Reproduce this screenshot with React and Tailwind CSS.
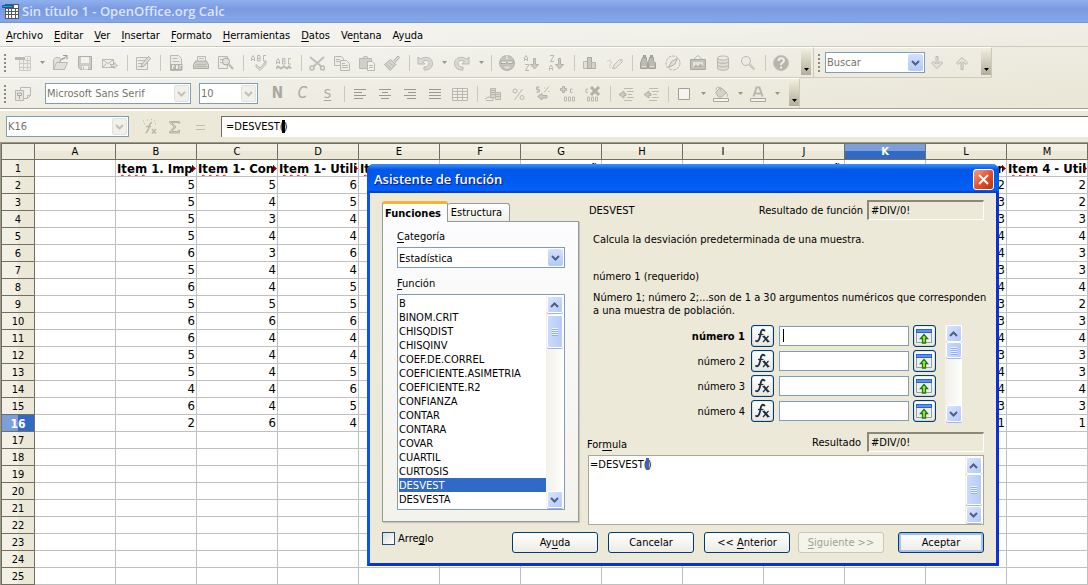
import React from "react";

const MENU = [
  ["", "A", "rchivo"], ["", "E", "ditar"], ["", "V", "er"], ["", "I", "nsertar"], ["", "F", "ormato"],
  ["", "H", "erramientas"], ["", "D", "atos"], ["Ve", "n", "tana"], ["Ay", "u", "da"],
];

const COLS = ["A", "B", "C", "D", "E", "F", "G", "H", "I", "J", "K", "L", "M"];
const ROWS = Array.from({ length: 25 }, (_, i) => i + 1);
const VALUES = {
  B: [5, 5, 5, 5, 6, 5, 6, 5, 6, 6, 5, 5, 4, 6, 2],
  C: [5, 4, 3, 4, 3, 4, 4, 5, 6, 4, 4, 4, 4, 4, 6],
  D: [6, 5, 4, 4, 6, 4, 5, 5, 6, 4, 4, 5, 6, 5, 4],
  L: [2, 3, 3, 4, 4, 3, 4, 3, 3, 4, 3, 4, 4, 3, 1],
  M: [2, 2, 3, 4, 3, 3, 4, 2, 3, 4, 3, 3, 4, 3, 1],
};
const TITLES = {
  B: ["Item", " 1. Imp"],
  C: ["Item", " 1- Con"],
  D: ["Item", " 1- Utili"],
  E: ["It", ""],
  M: ["Item", " 4 - Util"],
};
const TAILS = { G: "ñ", J: "ñ", L: "r" };

const FUNCTIONS = [
  "B", "BINOM.CRIT", "CHISQDIST", "CHISQINV", "COEF.DE.CORREL", "COEFICIENTE.ASIMETRIA", "COEFICIENTE.R2",
  "CONFIANZA", "CONTAR", "CONTARA", "COVAR", "CUARTIL", "CURTOSIS", "DESVEST", "DESVESTA",
];

const G = "#adaca4";
const L = "#deddd6";

const ICONS = {
  sheet: <><path d="M1 2h14v13H4V5H1z" fill="#eeede7" stroke="none" /><path d="M0 2h10v3H0z" fill={G} stroke="none" /><path d="M4.500 5v10.500h11v-14H10M4.500 8.500h11M4.500 12.500h11M8.500 5v10M12.500 3v12M10 5.500h5" stroke="#c4c3bb" /></>,
  open: <><path d="M1.500 14.500v-10l2-2h4l1 2h2M1.500 14.500l3-7h11l-3 7z" fill={L} /><path d="M8 7.500c0-3 2-4.500 5-4.500M11 .5h4v4M15 .5l-4 4" stroke="#86857e" /></>,
  save: <><path d="M1.500 1.500h13v13h-11l-2-2z" fill="#c5c4bd" stroke="#9d9c95" /><path d="M4 2h8v6H4zM5 11h6v3.500H5z" fill="#f3f2ec" stroke="none" /><path d="M6.500 11.500v2.500" /></>,
  mail: <><path d="M.5 4.500h11v8H.5zM.5 4.500l5.500 4 5.500-4M.5 12.500l4-4M11.500 12.500l-4-4" fill="#edece6" /><path d="M9 9.500h3v-2l3.500 3-3.500 3v-2H9z" fill={L} /></>,
  edit: <><path d="M1.500 2.500h11v12h-11z" fill="#edece6" /><path d="M3 5.500h7M3 8.500h4M3 11.500h3" /><path d="M6 12l1-3 6.500-7.500 2 2L9 11z" fill={L} stroke="#98978f" /></>,
  pdf: <><path d="M2.500.5h8l3 3v12h-11z" fill="#edece6" /><path d="M2 9h12.500v6H2z" fill="#a3a29a" stroke="none" /><path d="M4.500 14v-3.500h1.500v2M8.500 10.500v3h1v-3zM12 14v-3.500h1.500" stroke="#f4f3ed" /><path d="M4.500 3.500h5M4.500 6.500h7" /></>,
  print: <><path d="M4.500 6V1.500h8V6" fill="#f3f2ec" /><path d="M.5 9.500l2-3.500h11l2 3.500v4H.5z" fill="#c8c7c0" stroke="#9d9c95" /><path d="M3 9.500h10M2 11.500h12M6 3.500h5" /></>,
  preview: <><path d="M.5 1.500h9v12h-9z" fill="#edece6" /><path d="M2 4.500h3M2 7.500h3" /><circle cx="8" cy="6.500" r="3.500" fill={L} stroke="#98978f" /><path d="M11 9.500l4 4.500" strokeWidth="2" /></>,
  spell: <><path d="M.5 6V3L2 .5 3.500 3v3M.5 4.500h3M6.500.5V6H9V.5zM6.500 3.500H9M15 .5h-2.500V6H15" /><path d="M5 9.500l4 3.500 6-7v3l-6 6.500-4-3.500z" fill={L} /></>,
  autospell: <><path d="M.5 9V6L2 3.500 3.500 6v3M.5 7.500h3M6.500 3.500V9H9V3.500zM6.500 6H9M15 3.500h-2.500V9H15" /><path d="M0 13.500l2-2 3 2 3-2 3 2 2-2 2 2" strokeWidth="2" /></>,
  cut: <><path d="M1 2l12 10M15 2L4 12" stroke="#b6b5ad" strokeWidth="2" /><circle cx="3" cy="13" r="2" strokeWidth="1.500" /><circle cx="13.500" cy="13" r="2" strokeWidth="1.500" /></>,
  copy: <><path d="M.5 1.500h7l2 2v7h-9z" fill="#edece6" /><path d="M6.500 5.500h6l3 3v7h-9z" fill="#edece6" /><path d="M2 4.500h4M2 6.500h4M8 8.500h3M8 10.500h6M8 12.500h6" /></>,
  paste: <><path d="M.5 3.500h12v10H.5z" fill="#c9c8c1" /><path d="M4 3.500l1-2h3l1 2z" fill={L} /><path d="M8.500 6.500h5l2 2v7h-7z" fill="#f3f2ec" /><path d="M10 10.500h4M10 12.500h4" /></>,
  brush: <><path d="M9.500 6l4.500-5 1.500 1.500-4.500 5" fill={L} stroke="#98978f" /><path d="M.5 9.500l6-5 5.500 5-6 6z" fill="#cfcec7" stroke="#a3a29a" /><path d="M2.500 9.500l5 4M5 7.500l5 4" /></>,
  undo: <path d="M1 2v7h7L5.500 6.500C9 4 12 6 12 8.500S9.500 12.500 7 12v3c5 .5 8.500-2.500 8.500-6.500C15.500 3 9 .5 3.500 4z" fill="#d6d5ce" />,
  redo: <path d="M15 2v7H8l2.500-2.500C7 4 4 6 4 8.500s2.500 4 5 3.500v3C4 15.500.5 12.500.5 8.500.5 3 7 .5 12.500 4z" fill="#d6d5ce" />,
  globe: <><circle cx="8" cy="8" r="7.500" fill="#bdbcb5" stroke="#a3a29a" /><path d="M2 6h12v2.500H9L8 7 7 8.500H2z" fill="#edece6" stroke="#98978f" /><path d="M3.500 11h9l-3 3h-3z" fill="#e6e5de" /><path d="M8 0v5" stroke="#edece6" /></>,
  az: <><path d="M.5 6V3L2 .5 3.500 3v3M.5 4.500h3M1 9.500h4L1.500 15.500H5" /><path d="M9.500 3.500h2v6h3L10.500 14l-4-4.500h3z" fill="#c5c4bd" stroke="#a3a29a" /></>,
  za: <><path d="M1 .5h4L1.500 6.500H5M.5 15.500v-3L2 10l1.500 2.500v3M.5 13.500h3" /><path d="M9.500 3.500h2v6h3L10.500 14l-4-4.500h3z" fill="#c5c4bd" stroke="#a3a29a" /></>,
  chart: <><path d="M1.500 6.500h4v7h-4z" fill={L} /><path d="M5.500 2.500h4v11h-4z" fill="#bfbeb7" stroke="#98978f" /><path d="M9.500 7.500h4v6h-4z" fill="#cfcec7" stroke="#a3a29a" /></>,
  draw: <><path d="M0 6.500c3-2 5-1 4 1.500s-2 3.500-.5 5" stroke="#c9c8c1" /><path d="M5.500 13.500l1.500-3.500 5-5 3-.5v2.500l-6 6z" fill="#e6e5de" stroke="#b3b2aa" /></>,
  find: <><path d="M2.500 2.500h4v3l1 2v6h-7V8z" fill="#b0afa7" stroke="#8f8e87" /><path d="M9.500 2.500h4V6l2 2v5.500h-7v-6z" fill="#b0afa7" stroke="#8f8e87" /><path d="M2 11.500h4M10 11.500h4" stroke="#dddcd5" /><path d="M3 1h3M10 1h3" strokeWidth="2" stroke="#8f8e87" /></>,
  compass: <><circle cx="8" cy="8" r="7" fill="#ecebe5" strokeDasharray="3 1" /><path d="M12.500 3.500L9.500 9.500l-6 3 3-6z" fill={L} stroke="#a3a29a" /></>,
  gallery: <><path d="M4 4l4-3.500L12 4" /><path d="M.5 4.500h15v10H.5z" fill="#b9b8b1" stroke="#98978f" /><path d="M3 7h10v5.500H3z" fill="#e2e1da" stroke="none" /><path d="M3 12.500l3-3 2 2 2.500-3 3 4z" fill="#a3a29a" stroke="none" /></>,
  db: <><path d="M2.500 3v10c0 3 11 3 11 0V3" fill="#d9d8d1" /><ellipse cx="8" cy="3" rx="5.500" ry="2" fill="#edece6" /><path d="M2.500 6.500c0 2.500 11 2.500 11 0M2.500 10c0 2.500 11 2.500 11 0" /></>,
  zoom: <><circle cx="6" cy="6" r="4.500" fill="#ecebe5" /><path d="M9.500 9.500l5 5" strokeWidth="2.500" stroke="#c1c0b9" /></>,
  help: <><circle cx="8" cy="8" r="7.500" fill="#a9a8a1" stroke="#b9b8b0" /><path d="M5.500 6c0-3.500 5.500-3.500 5.500-.5 0 2-3 2-3 4.500M8 11.500v2" stroke="#f1f0ea" strokeWidth="2" /></>,
  styles: <><path d="M5.500 1.500h10v8l-3 3h-7z" fill="#f0efe9" /><path d="M12.500 12.500v-3h3" /><path d="M.5 4.500h8v10h-8z" fill="#e4e3dc" /><path d="M2.500 7h4v2.500h-4zM4.500 9.500V13" stroke="#98978f" /></>,
  left: <path d="M2 3.500h12M2 6.500h8M2 9.500h12M2 12.500h9" stroke="#86857e" />,
  center: <path d="M2 3.500h12M5 6.500h6M2 9.500h12M4 12.500h8" stroke="#86857e" />,
  right: <path d="M2 3.500h12M6 6.500h8M2 9.500h12M5 12.500h9" stroke="#86857e" />,
  justify: <path d="M2 3.500h12M2 6.500h12M2 9.500h12M2 12.500h12" stroke="#86857e" />,
  grid: <><path d="M.5 2.500h15v12H.5z" fill="#f0efe9" /><path d="M.5 5.500h15M.5 8.500h15M.5 11.500h15M5.500 2.500v12M10.500 2.500v12" /></>,
  coins: <><path d="M5.500 2.500h5v9h-5z" fill="#cfcec7" /><path d="M10.500 6.500h5v7h-5z" fill="#d6d5ce" /><path d="M6 4.500h4M6 6.500h4M6 8.500h4M11 8.500h4M11 10.500h4M0 13l3-2 5 1v2.500H1" /></>,
  percent: <><circle cx="5" cy="5" r="2" /><circle cx="12" cy="11.500" r="2" /><path d="M12.500 3l-8 11" /></>,
  stdfmt: <><path d="M4.500 1h-3v2.500h3V6h-3M3 0v7M9 6.500L14 .5M9.500 1.500v1M14 5v1" /><path d="M12 9.500H7V7.500L2.500 10.500 7 14v-2h5z" fill="#c5c4bd" stroke="#a3a29a" /></>,
  adddec: <><path d="M2.500.5h2v2h2v2h-2v2h-2v-2h-2v-2h2z" fill="#c9c8c1" stroke="#a3a29a" /><path d="M12.500 3h-2v3.500h2M4.500 11v4h2v-4zM8.500 11v4h2v-4zM12.500 11v4h2v-4z" /></>,
  deldec: <><path d="M3 3H1v3.500h2M2.500 11v4h2v-4zM6.500 11v4h2v-4zM10.500 11v4h2v-4z" /><path d="M6 1l8 8M14 1L6 9" stroke="#a3a29a" strokeWidth="3" /></>,
  indent: <><path d="M6 7.500V5L1 8.500 6 12V9.500h2v-2z" fill="#c5c4bd" stroke="#a3a29a" /><path d="M6 2.500h9M9 5.500h7M10 8.500h4M9 11.500h7M6 14.500h8" stroke="#b2b1a9" /></>,
  box: <path d="M2.500 2.500h11v11h-11z" fill="#f7f7f4" stroke="#8f8e86" />,
  bucket: <><path d="M2.500 6.500l5-5 6 5-5 4.500h-3z" fill="#cfcec7" stroke="#a3a29a" /><path d="M3 4c0-4 5-4 5 1M13 7c2 1 2 3 1 4" /><path d="M.5 12.500h15v3H.5z" fill="#f7f7f4" stroke="#98978f" /></>,
  fontcolor: <><path d="M3.500 10.500l3-9h3l3 9M5 7.500h6" strokeWidth="2" /><path d="M.5 12.500h15v3H.5z" fill="#f7f7f4" stroke="#98978f" /></>,
  down: <path d="M7 1.500h2V9l3-2.500L13.500 8 8 13.500 2.500 8 4 6.500 7 9z" fill="#e4e3dc" />,
  up: <path d="M7 14.500h2V7l3 2.500L13.500 8 8 2.500 2.500 8 4 9.500 7 7z" fill="#e4e3dc" />,
  wizard: <><path d="M10 3.500c-3-1-3 11-6.500 10M4 7.500h5" strokeWidth="1.500" /><path d="M10 10l4 4.500M14 10l-4 4.500" strokeWidth="1.500" /><path d="M1 2h2M2 5h2M5 1h1M12 2h2M13 5h2M9 .5h1" strokeDasharray="1 1" /></>,
  sum: <path d="M2.500 2.500h10v2h-1l-1-1H5l4 4.500-4 4.500h5.500l1-1.500h1v3h-10V13L7 8 2.500 3.500z" fill="#c5c4bd" stroke="#a9a89f" />,
  equal: <path d="M4 6.500h9M4 10.500h9" stroke="#b6b4a6" strokeWidth="1" />,
};

function Icon({ name }) {
  return (
    <svg width="16" height="16" viewBox="0 0 16 16" fill="none" stroke={G} className="opacity-80" aria-hidden="true">
      {ICONS[name]}
    </svg>
  );
}

function Tool({ name, label }) {
  return (
    <button type="button" aria-label={label} className="flex h-6 w-[25px] shrink-0 items-center pl-1">
      <Icon name={name} />
    </button>
  );
}

function Split({ label }) {
  return (
    <button type="button" aria-label={label} className="flex h-6 w-3 shrink-0 items-center justify-center">
      <svg width="5" height="3" viewBox="0 0 5 3" aria-hidden="true"><path d="M0 0h5L2.500 3z" fill="#98967f" /></svg>
    </button>
  );
}

function Sep() {
  return <span className="flex w-2 shrink-0 justify-center"><span className="h-4 w-px bg-[#cdc8b8]" /></span>;
}

function Grip() {
  return (
    <span className="flex w-[11px] shrink-0 flex-col items-start gap-[2px] pl-1" aria-hidden="true">
      {[0, 1, 2, 3, 4].map((i) => <span key={i} className="size-[2px] bg-[#8d8b7c]" />)}
    </span>
  );
}

function Overflow({ label }) {
  return (
    <button type="button" aria-label={label} className="flex h-[25px] w-[10px] shrink-0 items-end justify-center bg-linear-to-b from-[#ecead9] to-[#b1ae9b] pb-1">
      <svg width="5" height="3" viewBox="0 0 5 3" aria-hidden="true"><path d="M0 0h5L2.500 3z" fill="#000" /></svg>
    </button>
  );
}

function Chevron({ color = "#4d6185", flip = false }) {
  return (
    <svg width="9" height="6" viewBox="0 0 9 6" fill="none" stroke={color} strokeWidth="2" aria-hidden="true">
      <path d={flip ? "M1 5l3.500-3.500L8 5" : "M1 1l3.500 3.500L8 1"} />
    </svg>
  );
}

function Combo({ label, value, width, disabled }) {
  return (
    <span className={`flex h-[21px] shrink-0 items-stretch border border-[#7f9db9] bg-white ${width}`}>
      <select aria-label={label} defaultValue={value} className={`min-w-0 flex-1 appearance-none bg-transparent pt-px pl-px outline-none ${disabled ? "text-[#75746c]" : "text-black"}`}>
        <option>{value}</option>
      </select>
      <span className={`m-px flex w-[15px] items-center justify-center rounded-[2px] ${disabled === "all" ? "border border-[#e4e2d8] bg-[#f1f0ea]" : "bg-linear-to-b from-[#d3e0fd] to-[#b4c9f8]"}`}>
        <Chevron color={disabled === "all" ? "#c3c1b3" : "#4d6185"} />
      </span>
    </span>
  );
}

function ScrollBar({ thumb, topGap = "" }) {
  const btn = "flex h-[17px] w-4 shrink-0 items-center justify-center rounded-[2px] border border-white bg-linear-to-br from-[#d9e4fe] to-[#b4c9f8] shadow-[0_1px_0_#9fb6e3]";
  return (
    <div className="flex w-[17px] shrink-0 flex-col items-center bg-linear-to-r from-[#f1f0e9] to-[#fefefd]">
      <button type="button" aria-label="Subir" className={btn}><Chevron flip /></button>
      <div className={`flex w-4 shrink-0 flex-col items-center justify-center gap-px rounded-[2px] border border-white bg-linear-to-r from-[#cbdafc] to-[#b7cbf9] shadow-[0_1px_0_#9fb6e3] ${thumb} ${topGap}`}>
        {[0, 1, 2, 3].map((i) => <span key={i} className="h-px w-[6px] bg-[#eef4fe] shadow-[0_1px_0_#8cb0f8]" />)}
      </div>
      <div className="flex-1" />
      <button type="button" aria-label="Bajar" className={btn}><Chevron /></button>
    </div>
  );
}

function U({ parts }) {
  return <>{parts[0]}<span className="underline underline-offset-2">{parts[1]}</span>{parts[2]}</>;
}

function Cell({ col, row }) {
  const base = "h-[17px] overflow-hidden whitespace-nowrap border-r border-b border-[#c0c0c0] p-0 leading-4";
  if (row === 1 && (TITLES[col] || TAILS[col])) {
    return (
      <td className={base}>
        <div className="flex h-4 items-center text-[13px] font-bold">
          <div className={`min-w-0 flex-1 overflow-hidden pt-px leading-[15px] ${TAILS[col] ? "pr-[3px] text-right" : "pl-px"}`}>
            {TITLES[col] ? (
              <><span className="underline decoration-[#ff0000] decoration-wavy decoration-1 underline-offset-1">{TITLES[col][0]}</span>{TITLES[col][1]}</>
            ) : TAILS[col]}
          </div>
          <svg width="4" height="7" viewBox="0 0 4 7" className="-ml-1 shrink-0" aria-hidden="true"><path d="M0 0l4 3.500L0 7z" fill="#8e0000" /><path d="M0 0v7" stroke="#000" /></svg>
        </div>
      </td>
    );
  }
  const v = row > 1 && VALUES[col] ? VALUES[col][row - 2] : undefined;
  return <td className={`${base} pr-px text-right text-[13px]`}>{v}</td>;
}

function Sheet() {
  return (
    <div className="border-t border-l border-[#9b9888]">
      <table className="w-full table-fixed border-separate border-spacing-0 border-t border-[#716f64] bg-white">
        <colgroup>
          <col className="w-[34px]" />
          {COLS.map((c) => <col key={c} />)}
        </colgroup>
        <thead>
          <tr>
            <th className="h-4 border-r border-b border-l border-[#716f64] bg-[#efede1] p-0" />
            {COLS.map((c) => (
              <th key={c} scope="col" className={`h-4 border-r border-b border-[#716f64] p-0 pt-px text-[11px] leading-[14px] ${c === "K" ? "bg-linear-to-b from-[#7c9fdb] from-50% to-[#316ac5] to-50% font-bold text-white" : "bg-linear-to-b from-[#f3f1e6] from-50% to-[#ebe8d8] to-50% font-normal"}`}>
                {c}
              </th>
            ))}
          </tr>
        </thead>
        <tbody>
          {ROWS.map((r) => (
            <tr key={r}>
              <th scope="row" className={`h-[17px] border-r border-b border-l border-[#716f64] p-0 pt-[2px] leading-[14px] ${r === 16 ? "bg-linear-to-r from-[#7c9fdb] from-50% to-[#316ac5] to-50% text-[12px] font-bold text-white" : "bg-linear-to-r from-[#f3f1e6] from-50% to-[#ebe8d8] to-50% text-[11px] font-normal"}`}>
                {r}
              </th>
              {COLS.map((c) => <Cell key={c} col={c} row={r} />)}
            </tr>
          ))}
        </tbody>
      </table>
    </div>
  );
}

function PushButton({ parts, variant = "normal", className = "" }) {
  const look = {
    normal: "border-[#003c74] bg-linear-to-b from-white to-[#ecebe5] text-black",
    primary: "border-[#003c74] bg-linear-to-b from-white to-[#ecebe5] text-black shadow-[inset_0_0_0_2px_#a6c0f0]",
    off: "border-[#c9c7ba] bg-[#f5f4ea] text-[#a1a192]",
  }[variant];
  return (
    <button type="button" disabled={variant === "off"} className={`h-[21px] w-[86px] rounded-[3px] border text-center ${look} ${className}`}>
      <U parts={parts} />
    </button>
  );
}

const SQUARE = "flex h-[22px] w-[23px] shrink-0 items-center justify-center rounded-[3px] border border-[#003c74] bg-linear-to-b from-white to-[#e9e7dd] shadow-[inset_0_0_1px_#003c74]";

function ArgRow({ n }) {
  return (
    <div className="flex h-[22px] items-center">
      <label htmlFor={`arg${n}`} className={`flex-1 text-right ${n === 1 ? "font-bold" : ""}`}>número {n}</label>
      <button type="button" aria-label={`Función para número ${n}`} className={`${SQUARE} ml-[6px]`}>
        <svg width="17" height="16" viewBox="0 0 17 16" fill="none" stroke="#1f3044" aria-hidden="true">
          <path d="M10.500 2.500C8 .5 7 3 6.500 6S5 14.500 2 13" strokeWidth="1.800" strokeLinecap="round" />
          <path d="M4 6.500h5.500" strokeWidth="1.200" />
          <path d="M9.500 8l5 6" strokeWidth="2" />
          <path d="M14.500 8l-5.500 6M8.500 8.500h2M13.500 13.500h2" strokeWidth="1.200" />
        </svg>
      </button>
      <div className="relative ml-[5px] flex h-5 w-[130px] shrink-0 border border-[#7f9db9] bg-white">
        <input id={`arg${n}`} type="text" autoComplete="off" className="min-w-0 flex-1 bg-transparent px-[3px] outline-none" />
        {n === 1 && <span className="absolute top-[2px] left-[3px] h-[13px] w-px bg-black" />}
      </div>
      <button type="button" aria-label={`Seleccionar número ${n}`} className={`${SQUARE} ml-[4px]`}>
        <svg width="17" height="16" viewBox="0 0 17 16" aria-hidden="true">
          <path d="M.5 1.500h15v13H.5z" fill="#eceef1" stroke="#9a9ea8" />
          <path d="M0 1h16v4H0z" fill="#2a62d8" /><path d="M1 2h14v2H1z" fill="#5a92f4" />
          <path d="M8 6.500L11.500 10.500H9.500v4.500h-3v-4.500H4.500z" fill="#b4e63c" stroke="#1b7a16" strokeWidth="1.300" />
        </svg>
      </button>
    </div>
  );
}

const SUNKEN = "h-5 w-[117px] shrink-0 border border-t-2 border-[#8a887a] border-r-white border-b-white border-l-2 bg-transparent px-[2px] outline-none";

function Dialog() {
  return (
    <section role="dialog" aria-labelledby="dlg" className="absolute top-[164px] left-[367px] w-[632px] rounded-t-[7px] border-3 border-t-0 border-[#0831d9] border-l-[#0855e8] bg-[#ece9d8] text-black">
      <header className="-mx-[3px] flex h-[29px] items-center justify-between rounded-t-[7px] bg-linear-to-b from-[#3a92ff] via-[#0056e6] via-20% to-[#0262fb] pr-[5px] pl-[7px] shadow-[inset_0_-2px_1px_#0043cf]">
        <h2 id="dlg" className="pt-[3px] font-['Open_Sans','Noto_Sans',sans-serif] text-[13px] font-semibold text-white [text-shadow:1px_1px_1px_#0f1089]">Asistente de función</h2>
        <button type="button" aria-label="Cerrar" className="mt-px flex size-[21px] items-center justify-center rounded-[3px] border border-white bg-linear-to-br from-[#f0a088] via-[#e2522c] to-[#b93310]">
          <svg width="11" height="11" viewBox="0 0 11 11" stroke="#fff" strokeWidth="2" aria-hidden="true"><path d="M1 1l9 9M10 1l-9 9" /></svg>
        </button>
      </header>

      <div className="px-3 pt-[7px] pb-[10px] leading-[13px]">
        <div className="flex gap-2">
          <div className="flex w-[197px] shrink-0 flex-col pt-px">
            <div role="tablist" className="flex h-5 items-end">
              <button type="button" role="tab" aria-selected="true" className="z-1 -mb-px h-[21px] w-[66px] rounded-t-[3px] border border-t-3 border-b-0 border-[#919b9c] border-t-[#f5b335] bg-[#fcfcfe] pr-1 font-bold">Funciones</button>
              <button type="button" role="tab" aria-selected="false" className="h-[18px] w-[62px] rounded-t-[3px] border border-b-0 border-l-0 border-[#919b9c] bg-linear-to-b from-white to-[#f0efe7] pr-1">Estructura</button>
            </div>
            <div className="flex flex-col border border-[#919b9c] bg-linear-to-b from-[#fcfcfe] to-[#f3f2eb] pt-2 pr-[13px] pb-[11px] pl-[14px] shadow-[1px_1px_1px_#c9c6b6]">
              <span><U parts={["", "C", "ategoría"]} /></span>
              <span className="mt-1 flex flex-col"><Combo label="Categoría" value="Estadística" width="w-full" /></span>
              <label htmlFor="fn" className="mt-[9px]"><U parts={["", "F", "unción"]} /></label>
              <div className="mt-1 flex h-[216px] border border-[#7f9db9] bg-white p-px">
                <select id="fn" size={15} defaultValue="DESVEST" className="min-w-0 flex-1 appearance-none overflow-hidden bg-white outline-none">
                  {FUNCTIONS.map((f) => (
                    <option key={f} className="block h-[14px] min-h-0 p-0 pt-px leading-[13px] checked:bg-linear-to-b checked:from-[#316ac5] checked:to-[#316ac5] checked:[-webkit-text-fill-color:#fff]">{f}</option>
                  ))}
                </select>
                <ScrollBar thumb="h-[33px]" topGap="mt-[2px]" />
              </div>
            </div>
          </div>

          <div className="flex min-w-0 flex-1 flex-col">
            <div className="flex items-center">
              <span className="flex-1 pl-[2px]">DESVEST</span>
              <label htmlFor="fres" className="mr-1">Resultado de función</label>
              <input id="fres" readOnly defaultValue="#DIV/0!" className={SUNKEN} />
            </div>
            <p className="mt-[13px] pl-[6px]">Calcula la desviación predeterminada de una muestra.</p>
            <p className="mt-6 pl-[6px]">número 1 (requerido)</p>
            <p className="mt-2 pl-[6px] whitespace-nowrap">Número 1; número 2;...son de 1 a 30 argumentos numéricos que corresponden<br />a una muestra de población.</p>
            <div className="mt-2 flex">
              <div className="flex w-[349px] flex-col gap-[3px]">
                {[1, 2, 3, 4].map((n) => <ArgRow key={n} n={n} />)}
              </div>
              <div className="ml-[9px] flex"><ScrollBar thumb="h-4" /></div>
            </div>
            <div className="mt-[10px] flex items-center">
              <label htmlFor="formula" className="flex-1 pt-1"><U parts={["For", "m", "ula"]} /></label>
              <label htmlFor="res" className="mr-[6px]">Resultado</label>
              <input id="res" readOnly defaultValue="#DIV/0!" className={SUNKEN} />
            </div>
            <div className="relative mt-[3px] ml-px flex h-[70px] border border-[#aca899] bg-white p-px">
              <textarea id="formula" defaultValue="=DESVEST()" className="min-w-0 flex-1 resize-none overflow-hidden bg-transparent pt-px outline-none" />
              <span className="absolute top-[2px] left-[57px] h-3 w-[3px] bg-[#316ac5]" />
              <ScrollBar thumb="h-[31px]" />
            </div>
          </div>
        </div>

        <div className="mt-[7px] flex items-start">
          <input id="arr" type="checkbox" className="size-[13px] appearance-none border border-[#1c5180] bg-linear-to-br from-[#dcdcd7] to-white" />
          <label htmlFor="arr" className="flex-1 pl-[3px]"><U parts={["Arre", "g", "lo"]} /></label>
          <PushButton parts={["Ay", "u", "da"]} />
          <PushButton parts={["Cancelar", "", ""]} className="ml-[10px]" />
          <PushButton parts={["<< ", "A", "nterior"]} className="ml-[10px]" />
          <PushButton parts={["", "S", "iguiente >>"]} variant="off" className="ml-2" />
          <PushButton parts={["Aceptar", "", ""]} variant="primary" className="ml-[14px]" />
        </div>
      </div>
    </section>
  );
}

export default function App() {
  return (
    <main className="relative min-h-screen overflow-hidden bg-[#ece9d8] font-['DejaVu_Sans_Condensed','Noto_Sans',sans-serif] text-[11px] text-black">
      <header className="flex h-[23px] items-center gap-[3px] bg-linear-to-b from-[#8fb0ee] via-[#7b99e1] via-40% to-[#83a9ea] pl-[2px] shadow-[inset_0_-1px_0_#7a93df]">
        <svg width="17" height="17" viewBox="0 0 17 17" aria-hidden="true">
          <path d="M3 1h14v15H3z" fill="#54585e" />
          <path d="M4 6h2v2H4zM7 6h2v2H7zM10 6h3v2h-3zM14 6h2v2h-2zM4 9h2v2H4zM7 9h2v2H7zM10 9h3v2h-3zM14 9h2v2h-2zM4 12h2v3H4zM7 12h2v3H7zM10 12h3v3h-3zM14 12h2v3h-2zM12 2h4v3h-4z" fill="#fff" />
          <path d="M.5 2.500h10v2H.5z" fill="#2a9ae0" stroke="#0c5e9c" />
        </svg>
        <h1 className="font-['Open_Sans','Noto_Sans',sans-serif] text-[13px] font-semibold text-[#dbe5fa]">Sin título 1 - OpenOffice.org Calc</h1>
      </header>

      <div className="bg-linear-to-br from-[#f6f6f5] to-[#e9e6d5]">
        <nav className="flex h-6 items-center gap-[11px] border-b border-[#cdcaba] pt-[3px] pl-[6px]">
          {MENU.map((m) => <a key={m.join("")} href="#menu" className="whitespace-nowrap"><U parts={m} /></a>)}
        </nav>

        <div className="flex">
          <div className="flex h-[31px] items-center border-t border-r border-b border-t-white border-r-[#cdcaba] border-b-[#cdcaba] pr-[2px]">
            <Grip />
            <Tool name="sheet" label="Nuevo" /><Split label="Tipos de documento" />
            <Tool name="open" label="Abrir" /><Tool name="save" label="Guardar" /><Tool name="mail" label="Enviar" /><Sep />
            <Tool name="edit" label="Editar archivo" /><Sep />
            <Tool name="pdf" label="Exportar a PDF" /><Tool name="print" label="Imprimir" /><Tool name="preview" label="Vista preliminar" /><Sep />
            <Tool name="spell" label="Ortografía" /><Tool name="autospell" label="Revisión automática" /><Sep />
            <Tool name="cut" label="Cortar" /><Tool name="copy" label="Copiar" /><Tool name="paste" label="Pegar" /><Tool name="brush" label="Copiar formato" /><Sep />
            <Tool name="undo" label="Deshacer" /><Split label="Lista deshacer" /><Tool name="redo" label="Restaurar" /><Split label="Lista restaurar" /><Sep />
            <Tool name="globe" label="Hiperenlace" /><Tool name="az" label="Orden ascendente" /><Tool name="za" label="Orden descendente" /><Sep />
            <Tool name="chart" label="Gráfico" /><Tool name="draw" label="Dibujo" /><Sep />
            <Tool name="find" label="Buscar y reemplazar" /><Tool name="compass" label="Navegador" /><Tool name="gallery" label="Galería" /><Tool name="db" label="Fuentes de datos" /><Tool name="zoom" label="Escala" /><Sep />
            <Tool name="help" label="Ayuda" />
            <span className="w-[7px] shrink-0" />
            <Overflow label="Más botones estándar" />
          </div>
          <div className="flex h-[31px] items-center border-t border-r border-b border-t-white border-r-[#cdcaba] border-b-[#cdcaba]">
            <Grip />
            <Combo label="Buscar" value="Buscar" width="w-[100px]" disabled="text" />
            <Tool name="down" label="Buscar siguiente" /><Tool name="up" label="Buscar anterior" />
            <span className="w-[6px] shrink-0" />
            <Overflow label="Más botones de búsqueda" />
          </div>
        </div>

        <div className="flex border-b border-[#a5a292]">
          <div className="flex h-[30px] items-center border-t border-r border-t-white border-r-[#cdcaba]">
            <Grip />
            <Tool name="styles" label="Estilo y formato" />
            <span className="w-[9px] shrink-0" />
            <Combo label="Nombre de fuente" value="Microsoft Sans Serif" width="w-[146px]" disabled="all" />
            <span className="w-2 shrink-0" />
            <Combo label="Tamaño" value="10" width="w-[59px]" disabled="all" />
            <span className="w-[7px] shrink-0" />
            <button type="button" className="w-[25px] text-center text-[15px] font-bold text-[#a9a89f]">N</button>
            <button type="button" className="w-[25px] text-center text-[15px] text-[#a9a89f] italic">C</button>
            <button type="button" className="w-[25px] text-center text-[13px] text-[#a9a89f] underline underline-offset-2">S</button>
            <Sep />
            <Tool name="left" label="Izquierda" /><Tool name="center" label="Centrado" /><Tool name="right" label="Derecha" /><Tool name="justify" label="Justificado" /><Tool name="grid" label="Combinar celdas" /><Sep />
            <Tool name="coins" label="Moneda" /><Tool name="percent" label="Porcentaje" /><Tool name="stdfmt" label="Formato estándar" /><Tool name="adddec" label="Añadir decimal" /><Tool name="deldec" label="Eliminar decimal" /><Sep />
            <Tool name="indent" label="Reducir sangría" /><Tool name="indent" label="Aumentar sangría" /><Sep />
            <Tool name="box" label="Bordes" /><Split label="Tipos de borde" /><Tool name="bucket" label="Color de fondo" /><Split label="Colores de fondo" /><Tool name="fontcolor" label="Color de fuente" /><Split label="Colores de fuente" />
            <span className="w-[6px] shrink-0" />
            <Overflow label="Más botones de formato" />
          </div>
        </div>
      </div>

      <div className="flex h-[33px] items-center border-t-2 border-white pl-[6px]">
        <Combo label="Cuadro de nombre" value="K16" width="w-[123px]" disabled="all" />
        <span className="w-[9px] shrink-0" />
        <Tool name="wizard" label="Asistente" /><Tool name="sum" label="Suma" /><Tool name="equal" label="Función" />
        <div className="relative ml-2 flex h-[21px] flex-1 border-t border-l border-[#716f64] bg-white">
          <input aria-label="Línea de entrada" defaultValue="=DESVEST()" className="min-w-0 flex-1 bg-transparent pl-1 outline-none" />
          <span className="absolute top-[3px] left-[60px] h-[13px] w-[3px] bg-black" />
        </div>
      </div>

      <Sheet />
      <Dialog />
    </main>
  );
}
